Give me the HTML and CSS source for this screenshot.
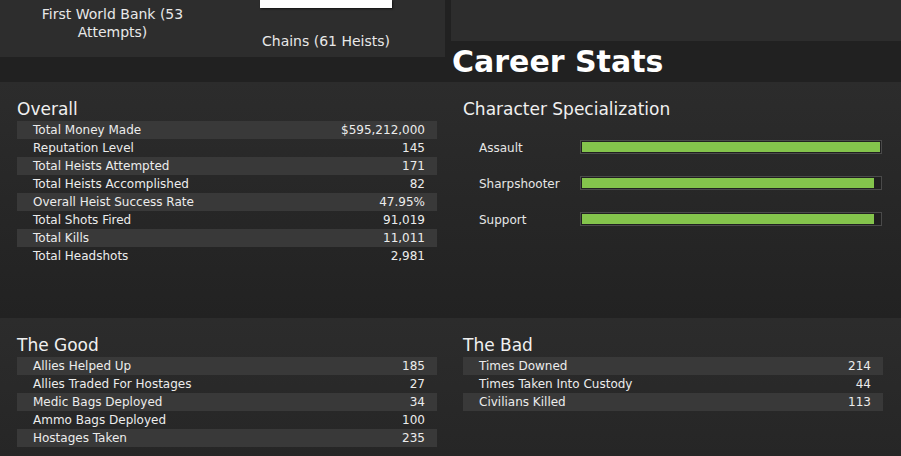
FILE: index.html
```html
<!DOCTYPE html>
<html>
<head>
<meta charset="utf-8">
<link rel="stylesheet" href="styles.css">
</head>
<body>
<div class="top">
  <div class="top-left">
    <div class="fav">First World Bank (53<br>Attempts)</div>
    <div class="fav fav-right">
      <div class="card"></div>
      <div class="fav-label">Chains (61 Heists)</div>
    </div>
  </div>
  <div class="top-right">
    <div class="top-right-panel"></div>
    <h1 class="title">Career Stats</h1>
  </div>
</div>

<div class="section">
  <div class="col">
    <h2 class="heading">Overall</h2>
    <div class="table">
      <div class="row"><span>Total Money Made</span><span>$595,212,000</span></div>
      <div class="row"><span>Reputation Level</span><span>145</span></div>
      <div class="row"><span>Total Heists Attempted</span><span>171</span></div>
      <div class="row"><span>Total Heists Accomplished</span><span>82</span></div>
      <div class="row"><span>Overall Heist Success Rate</span><span>47.95%</span></div>
      <div class="row"><span>Total Shots Fired</span><span>91,019</span></div>
      <div class="row"><span>Total Kills</span><span>11,011</span></div>
      <div class="row"><span>Total Headshots</span><span>2,981</span></div>
    </div>
  </div>
  <div class="col col-right">
    <h2 class="heading">Character Specialization</h2>
    <div class="specs">
      <div class="spec"><span class="spec-label">Assault</span><div class="bar"><div class="fill" style="width:100%"></div></div></div>
      <div class="spec"><span class="spec-label">Sharpshooter</span><div class="bar"><div class="fill" style="width:97.9%"></div></div></div>
      <div class="spec"><span class="spec-label">Support</span><div class="bar"><div class="fill" style="width:97.9%"></div></div></div>
    </div>
  </div>
</div>

<div class="section section-bottom">
  <div class="col">
    <h2 class="heading">The Good</h2>
    <div class="table">
      <div class="row"><span>Allies Helped Up</span><span>185</span></div>
      <div class="row"><span>Allies Traded For Hostages</span><span>27</span></div>
      <div class="row"><span>Medic Bags Deployed</span><span>34</span></div>
      <div class="row"><span>Ammo Bags Deployed</span><span>100</span></div>
      <div class="row"><span>Hostages Taken</span><span>235</span></div>
    </div>
  </div>
  <div class="col col-right">
    <h2 class="heading">The Bad</h2>
    <div class="table">
      <div class="row"><span>Times Downed</span><span>214</span></div>
      <div class="row"><span>Times Taken Into Custody</span><span>44</span></div>
      <div class="row"><span>Civilians Killed</span><span>113</span></div>
    </div>
  </div>
</div>
</body>
</html>
```

FILE: styles.css
```css
html, body {
  margin: 0;
  padding: 0;
}
body {
  background: #212121;
  color: #e6e6e6;
  font-family: "DejaVu Sans", "Noto Sans", sans-serif;
  width: 901px;
  height: 456px;
  overflow: hidden;
}
.top {
  display: flex;
  height: 82px;
}
.top-left {
  width: 445px;
  height: 57px;
  background: #2d2d2d;
  display: flex;
}
.fav {
  width: 225px;
  text-align: center;
  font-size: 14px;
  line-height: 18px;
  padding-top: 5px;
  color: #e8e8e8;
}
.fav-right {
  width: 202px;
  padding-top: 0;
  display: flex;
  flex-direction: column;
  align-items: center;
}
.card {
  width: 132px;
  height: 8px;
  background: #fdfdfd;
  box-shadow: 1px 1px 2px rgba(0,0,0,0.6);
}
.fav-label {
  margin-top: 24px;
}
.top-right {
  margin-left: 6px;
  width: 450px;
  display: flex;
  flex-direction: column;
}
.top-right-panel {
  height: 41px;
  background: #2d2d2d;
}
.title {
  margin: 0;
  padding-left: 1px;
  font-family: "DejaVu Sans", sans-serif;
  font-weight: bold;
  font-size: 30px;
  line-height: 41px;
  color: #ffffff;
}
.section {
  display: flex;
  height: 236px;
  background: linear-gradient(#2c2c2c, #222222);
}
.section-bottom {
  height: 138px;
  background: linear-gradient(#2c2c2c, #262626);
}
.col {
  width: 420px;
  padding-left: 17px;
  padding-top: 15px;
}
.col-right {
  padding-left: 26px;
  width: 420px;
}
.heading {
  margin: 0;
  font-weight: normal;
  font-size: 17px;
  line-height: 24px;
  color: #f0f0f0;
}
.table {
  display: flex;
  flex-direction: column;
}
.row {
  display: flex;
  justify-content: space-between;
  height: 18px;
  line-height: 18px;
  font-size: 12px;
  padding: 0 12px 0 16px;
  color: #ececec;
}
.row:nth-child(odd) {
  background: #393939;
}
.specs {
  padding-top: 8px;
}
.spec {
  display: flex;
  align-items: center;
  height: 36px;
  font-size: 12px;
}
.spec-label {
  width: 101px;
  padding-left: 16px;
  padding-top: 2px;
}
.bar {
  width: 298px;
  height: 10px;
  padding: 1px;
  border: 1px solid #4a4a4a;
  background: #202020;
}
.fill {
  height: 100%;
  background: #84c44c;
}
```
